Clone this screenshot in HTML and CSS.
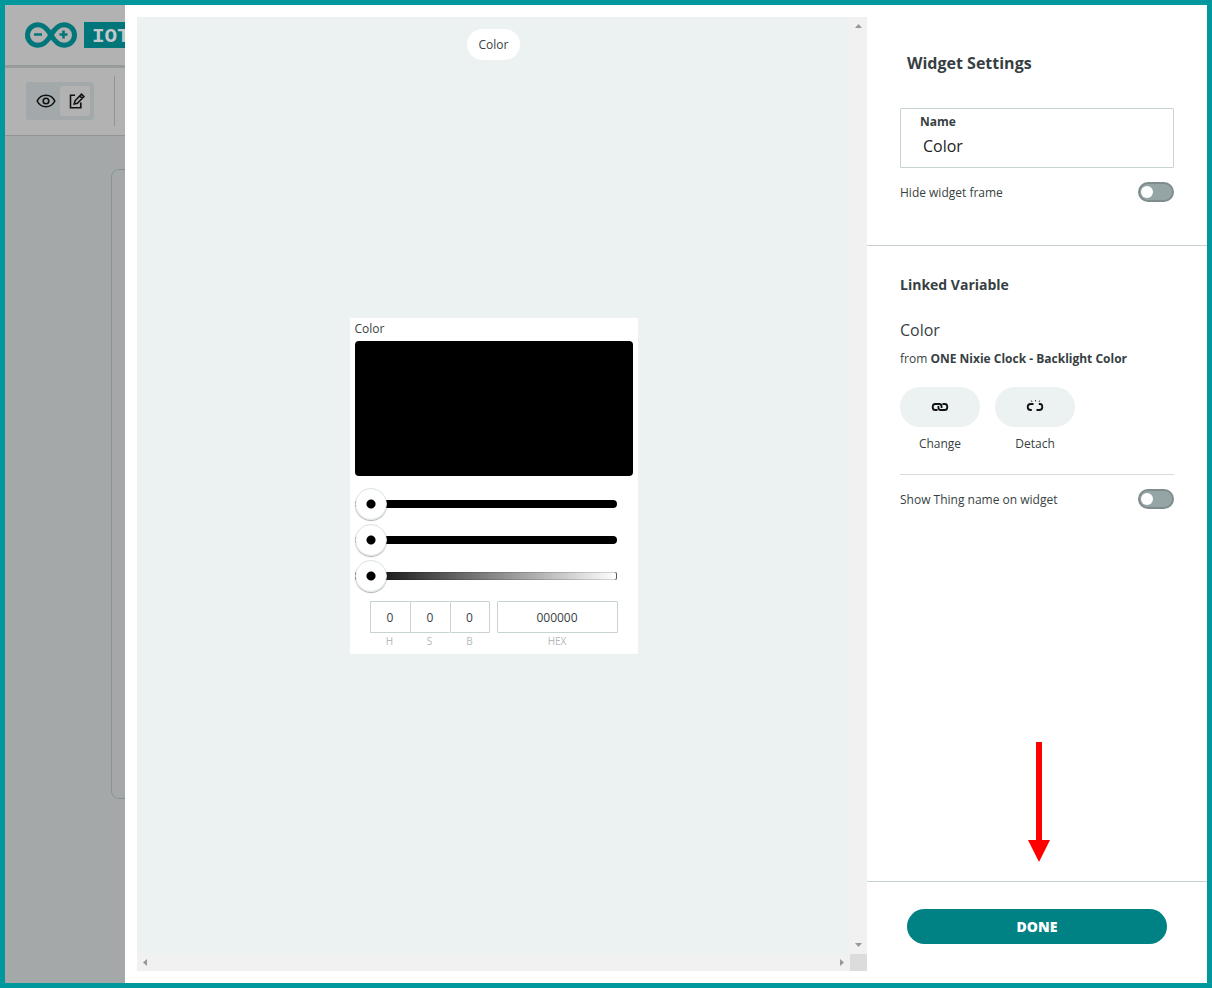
FILE: index.html
```html
<!DOCTYPE html>
<html lang="en">
<head>
<meta charset="utf-8">
<title>Widget Settings</title>
<link rel="stylesheet" href="styles.css">
</head>
<body>
<div class="app">
  <div class="backdrop">
    <header class="brand">
      <svg class="brand-logo" width="52" height="26" viewBox="0 0 52 26" aria-label="Arduino">
        <path d="M26 13C22 6 18.500 2.700 13 2.700C7 2.700 2.500 7.500 2.500 13S7 23.300 13 23.300C18.500 23.300 22 20 26 13C30 6 33.500 2.700 39 2.700C45 2.700 49.500 7.500 49.500 13S45 23.300 39 23.300C33.500 23.300 30 20 26 13Z" fill="none" stroke="currentColor" stroke-width="5"/>
        <path d="M9 12.500h8M34.500 12.500h8M38.500 8.500v8" fill="none" stroke="currentColor" stroke-width="2.600"/>
      </svg>
      <span class="brand-name">IOT</span>
    </header>
    <div class="toolbar">
      <div class="mode-switch">
        <button class="mode" type="button" aria-label="View">
          <svg width="20" height="14" viewBox="0 0 20 14" fill="none" stroke="currentColor" stroke-width="1.600"><path d="M1.200 7C3 3.200 6.200 1.300 10 1.300S17 3.200 18.800 7C17 10.800 13.800 12.700 10 12.700S3 10.800 1.200 7Z"/><circle cx="10" cy="7" r="2.800"/></svg>
        </button>
        <button class="mode mode-active" type="button" aria-label="Edit">
          <svg width="16" height="16" viewBox="0 0 16 16" fill="none" stroke="currentColor" stroke-width="1.600"><path d="M6 2.200H1.500V14.700H11.800V9.500"/><path d="M5.200 11L6 7.800L12.500 1.200L14.900 3.600L8.400 10.200ZM10.800 3L13.200 5.300"/></svg>
        </button>
      </div>
      <span class="toolbar-divider"></span>
    </div>
    <div class="dashboard"><div class="dashboard-frame"></div></div>
  </div>

  <main class="modal">
    <section class="preview" aria-label="Widget preview">
      <div class="canvas">
        <span class="pill">Color</span>
        <article class="widget">
          <h2 class="widget-title">Color</h2>
          <div class="swatch"></div>
          <div class="sliders">
            <input class="slider" type="range" min="0" max="360" value="0" aria-label="Hue">
            <input class="slider" type="range" min="0" max="100" value="0" aria-label="Saturation">
            <input class="slider slider-brightness" type="range" min="0" max="100" value="0" aria-label="Brightness">
          </div>
          <div class="values">
            <div class="hsb">
              <label class="value"><input type="text" value="0"><span>H</span></label>
              <label class="value"><input type="text" value="0"><span>S</span></label>
              <label class="value"><input type="text" value="0"><span>B</span></label>
            </div>
            <label class="value value-hex"><input type="text" value="000000"><span>HEX</span></label>
          </div>
        </article>
      </div>
      <div class="scrollbar scrollbar-y">
        <svg width="7" height="4" viewBox="0 0 7 4"><path d="M0 4L3.500 0L7 4Z" fill="currentColor"/></svg>
        <svg width="7" height="4" viewBox="0 0 7 4"><path d="M0 0L3.500 4L7 0Z" fill="currentColor"/></svg>
      </div>
      <div class="scrollbar scrollbar-x">
        <svg width="4" height="7" viewBox="0 0 4 7"><path d="M4 0L0 3.500L4 7Z" fill="currentColor"/></svg>
        <svg width="4" height="7" viewBox="0 0 4 7"><path d="M0 0L4 3.500L0 7Z" fill="currentColor"/></svg>
      </div>
      <div class="scroll-corner"></div>
    </section>

    <aside class="settings">
      <section class="general">
        <h1 class="settings-title">Widget Settings</h1>
        <div class="name-field">
          <label for="name">Name</label>
          <input id="name" type="text" value="Color">
        </div>
        <div class="option">
          <label for="hide-frame">Hide widget frame</label>
          <input class="switch" id="hide-frame" type="checkbox" role="switch">
        </div>
      </section>
      <section class="linked">
        <h2 class="linked-title">Linked Variable</h2>
        <p class="variable">Color</p>
        <p class="source">from <strong>ONE Nixie Clock - Backlight Color</strong></p>
        <div class="actions">
          <div class="action">
            <button type="button" aria-labelledby="change-label">
              <svg width="18" height="14" viewBox="0 0 18 14" fill="none" stroke="currentColor" stroke-width="1.800"><path d="M6.500 10H4.200C2.600 10 1.700 9 1.700 7S2.600 4 4.200 4H8.200C9.800 4 10.600 5 10.600 6.500V8"/><path d="M11.500 4H13.800C15.400 4 16.300 5 16.300 7S15.400 10 13.800 10H9.800C8.200 10 7.400 9 7.400 7.500V6"/></svg>
            </button>
            <span id="change-label">Change</span>
          </div>
          <div class="action">
            <button type="button" aria-labelledby="detach-label">
              <svg width="18" height="14" viewBox="0 0 18 14" fill="none" stroke="currentColor" stroke-width="1.800"><path d="M7.500 4H4.700C2.700 4 1.700 5 1.700 7S2.700 10 4.700 10H5.800M12.800 4H14C15.600 4 16.300 5 16.300 7S15.300 10 13.300 10H10.500"/><path d="M5.300 .500L6 2M9.500 0V1.400M13.700 .500L13 2" stroke-width=".8"/></svg>
            </button>
            <span id="detach-label">Detach</span>
          </div>
        </div>
        <div class="option option-ruled">
          <label for="show-thing">Show Thing name on widget</label>
          <input class="switch" id="show-thing" type="checkbox" role="switch">
        </div>
        <svg class="pointer" width="22" height="120" viewBox="0 0 22 120" aria-hidden="true"><path d="M8 0H14V98H22L11 120L0 98H8Z" fill="#f00"/></svg>
      </section>
      <footer class="settings-footer">
        <button class="done" type="button">DONE</button>
      </footer>
    </aside>
  </main>
</div>
</body>
</html>
```
FILE: styles.css
```css
*, *::before, *::after { box-sizing: border-box; }

body {
  margin: 0;
  font-family: "Open Sans", "Noto Sans", sans-serif;
  font-size: 12px;
  line-height: 17px;
  color: #373f43;
}

h1, h2, p { margin: 0; }
button, input { font: inherit; color: inherit; }
button { border: 0; padding: 0; cursor: pointer; }
svg { display: block; flex: none; }

.app {
  display: grid;
  grid-template-columns: 120px minmax(0, 1fr);
  min-height: 100vh;
  border: 5px solid #00979d;
}

/* Dimmed dashboard behind the modal */
.backdrop {
  display: flex;
  flex-direction: column;
  min-width: 0;
  overflow: hidden;
  background: #a4a8a9;
}

.brand {
  display: flex;
  align-items: center;
  gap: 7px;
  height: 63px;
  padding-left: 20px;
  background: #b2b2b2;
  border-bottom: 3px solid #999c9d;
}

.brand-logo { color: #00757a; }

.brand-name {
  flex: none;
  padding: 3px 8px 0;
  background: #00757a;
  color: #c4c8c8;
  font: bold 21px/23px "Liberation Mono", monospace;
}

.toolbar {
  display: flex;
  align-items: center;
  gap: 20px;
  height: 68px;
  padding: 0 0 2px 21px;
  background: #b2b2b2;
  border-bottom: 1px solid #8f9495;
}

.mode-switch {
  display: flex;
  padding: 4px;
  border-radius: 3px;
  background: #a3a9ab;
}

.mode {
  display: grid;
  place-items: center;
  width: 30px;
  height: 30px;
  border-radius: 3px;
  background: none;
  color: #111;
}

.mode:first-child { padding-left: 2px; }
.mode-active { padding-left: 4px; background: #b2b2b2; }

.toolbar-divider {
  width: 1px;
  height: 50px;
  background: #8f9495;
}

.dashboard {
  flex: 1;
  padding: 33px 0 184px 106px;
  display: flex;
}

.dashboard-frame {
  flex: none;
  width: 200px;
  border: 1px solid #8c9192;
  border-radius: 8px;
}

/* Modal */
.modal {
  display: grid;
  grid-template-columns: minmax(0, 1fr) 340px;
  background: #fff;
}

.preview {
  display: grid;
  grid-template: minmax(0, 1fr) 17px / minmax(0, 1fr) 17px;
  margin: 12px 0 12px 12px;
}

.canvas {
  display: grid;
  grid-template-rows: 1fr auto 1fr;
  justify-items: center;
  align-items: start;
  background: #ecf1f1;
}

.pill {
  margin-top: 12px;
  padding: 7px 12px;
  border-radius: 16px;
  background: #fff;
}

.scrollbar {
  display: flex;
  justify-content: space-between;
  align-items: center;
  background: #f1f1f1;
  color: #989898;
}

.scrollbar-y { flex-direction: column; padding: 7px 0; }
.scrollbar-x { padding: 0 6px; }
.scroll-corner { background: #dcdcdc; }

.widget {
  width: 288px;
  padding: 2px 5px 5px;
  background: #fff;
}

.widget-title {
  padding-bottom: 4px;
  font-size: 12px;
  font-weight: 400;
}

.swatch {
  height: 135px;
  border-radius: 4px;
  background: #000;
}

.sliders {
  display: grid;
  gap: 4px;
  margin: 12px 16px 9px 0;
}

.slider {
  width: 100%;
  height: 32px;
  margin: 0;
  appearance: none;
  background: none;
}

.slider::-webkit-slider-runnable-track {
  height: 8px;
  border-radius: 4px;
  background: #000;
}

.slider-brightness::-webkit-slider-runnable-track {
  border-radius: 2px;
  background: linear-gradient(90deg, #000, #fff);
  box-shadow: inset -1px 0 #555, inset 0 -1px rgba(0, 0, 0, .15), inset 0 1px rgba(0, 0, 0, .15);
}

.slider::-webkit-slider-thumb {
  width: 32px;
  height: 32px;
  margin-top: -12px;
  appearance: none;
  border: 1px solid #dae3e3;
  border-radius: 50%;
  background: radial-gradient(circle, #000 4px, #fff 5px) border-box;
  box-shadow: 0 1px 1px rgba(0, 0, 0, .3);
}

.values {
  display: grid;
  grid-template-columns: 120px minmax(0, 1fr);
  gap: 7px;
  padding: 0 15px;
}

.hsb { display: grid; grid-template-columns: repeat(3, 1fr); }

.value {
  display: grid;
  text-align: center;
  font-size: 10px;
  line-height: 16px;
  color: #b5b9b9;
}

.value input {
  width: 100%;
  min-width: 0;
  height: 32px;
  padding: 1px 0 0;
  border: 1px solid #c9d2d2;
  border-radius: 1px;
  background: #fff;
  color: #373f43;
  font-size: 12px;
  text-align: center;
}

.hsb .value:not(:last-child) input { border-right: 0; }

/* Settings panel */
.settings {
  display: flex;
  flex-direction: column;
}

.general {
  padding: 46px 33px 43px;
  border-bottom: 1px solid #c9d2d2;
}

.settings-title {
  padding-left: 7px;
  font-size: 16px;
  line-height: 24px;
}

.name-field {
  display: grid;
  margin: 33px 0 14px;
  padding: 4px 19px 5px;
  border: 1px solid #c9d2d2;
  border-radius: 1px;
}

.name-field label { font-weight: 700; }

.name-field input {
  width: 100%;
  height: 32px;
  padding: 0 3px;
  border: 0;
  background: none;
  color: #222;
  font-size: 16px;
}

.option {
  display: flex;
  align-items: center;
  justify-content: space-between;
}

.switch {
  width: 36px;
  height: 20px;
  margin: 0;
  appearance: none;
  border: 2px solid #7f8c8d;
  border-radius: 10px;
  background: #95a5a6;
}

.switch::before {
  content: "";
  display: block;
  width: 12px;
  height: 12px;
  margin: 2px 1px;
  border-radius: 50%;
  background: #fff;
}

.linked {
  position: relative;
  flex: 1;
  padding: 27px 33px;
}

.linked-title { font-size: 14px; line-height: 24px; }

.variable {
  margin-top: 21px;
  font-size: 16px;
  line-height: 24px;
}

.source { margin-top: 8px; }

.actions {
  display: flex;
  gap: 15px;
  margin: 20px 0 22px;
}

.action {
  display: grid;
  gap: 8px;
  text-align: center;
}

.action button {
  display: grid;
  place-items: center;
  width: 80px;
  height: 40px;
  border-radius: 20px;
  background: #ecf1f1;
  color: #111;
}

.option-ruled {
  padding-top: 14px;
  border-top: 1px solid #d5dcdc;
}

.pointer {
  position: absolute;
  bottom: 19px;
  left: 161px;
}

.settings-footer {
  padding: 27px 40px 39px;
  border-top: 1px solid #c9d2d2;
}

.done {
  display: block;
  width: 100%;
  height: 35px;
  border-radius: 18px;
  background: #008184;
  color: #fff;
  font-size: 14px;
  font-weight: 800;
}
```
